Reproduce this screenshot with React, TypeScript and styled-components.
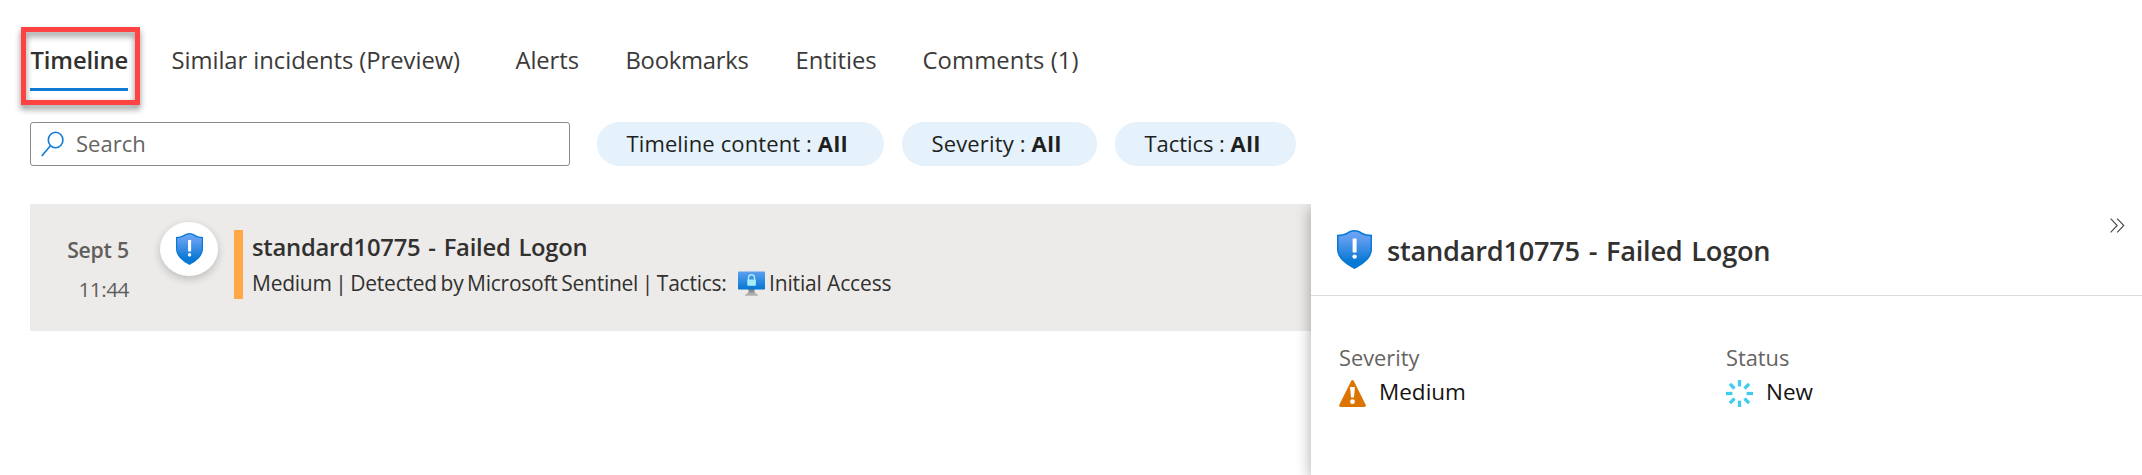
import React from 'react';
import styled, { createGlobalStyle } from 'styled-components';

const GlobalStyle = createGlobalStyle`
  * { box-sizing: border-box; }
  body {
    margin: 0;
    background: #fff;
    color: #323130;
    font-family: "Open Sans", "Noto Sans", sans-serif;
    overflow: hidden;
  }
  h1, h2, p { margin: 0; font-weight: 400; }
  svg { display: block; flex: none; }
`;

const Page = styled.main`
  display: flex;
  flex-direction: column;
  width: 2142px;
  height: 475px;
  overflow: hidden;
`;

const TabList = styled.nav`
  display: flex;
  align-items: flex-start;
  height: 122px;
  padding: 40px 0 0 30px;
`;

const TabSlot = styled.div<{ $width: number }>`
  width: ${(p) => p.$width}px;
  flex: none;
`;

const Tab = styled.a<{ $active?: boolean; $tracking: number }>`
  position: relative;
  display: inline-block;
  height: 51px;
  line-height: 40px;
  font-size: 23.8px;
  letter-spacing: ${(p) => p.$tracking}px;
  font-weight: ${(p) => (p.$active ? 600 : 400)};
  white-space: nowrap;
  color: #3b3a39;
  ${(p) => p.$active && 'width: 98px; padding-left: 0.5px; border-bottom: 3px solid #0f7bd6; color: #323130;'}
`;

const Highlight = styled.span`
  position: absolute;
  top: -13px;
  left: -9px;
  width: 119px;
  height: 78px;
  border: 5px solid #ff4343;
  filter: drop-shadow(0 4px 3px rgba(0, 0, 0, 0.45));
  pointer-events: none;
`;

const Filters = styled.div`
  display: flex;
  height: 82px;
  padding-left: 30px;
`;

const SearchBox = styled.label`
  display: flex;
  align-items: center;
  gap: 12px;
  width: 540px;
  height: 44px;
  margin-right: 27px;
  padding-left: 10px;
  border: 1px solid #8a8886;
  border-radius: 3px;
  font-size: 22px;
  line-height: 40px;
  color: #666462;
`;

const SearchText = styled.span`
  height: 42px;
`;

const Pill = styled.button<{ $width: number; $tracking?: number }>`
  width: ${(p) => p.$width}px;
  height: 44px;
  margin: 0 18px 0 0;
  padding: 0 0 2px 29.5px;
  border: 0;
  border-radius: 22px;
  background: #e5f1fb;
  color: #201f1e;
  font: 400 22px/42px "Open Sans", "Noto Sans", sans-serif;
  letter-spacing: ${(p) => p.$tracking ?? 0}px;
  text-align: left;
  white-space: nowrap;

  b { font-weight: 700; letter-spacing: 0.5px; }
`;

const Content = styled.div`
  display: flex;
  height: 271px;
  padding-left: 30px;
`;

const Timeline = styled.section`
  width: 1281px;
  flex: none;
`;

const Incident = styled.article`
  display: flex;
  height: 127px;
  background: #ecebe9;
`;

const When = styled.div`
  width: 99px;
  padding-top: 27px;
  text-align: right;
  color: #605e5c;
`;

const Day = styled.p`
  font-size: 21.2px;
  line-height: 38px;
  font-weight: 600;
  letter-spacing: -0.2px;
`;

const Time = styled.p`
  font-size: 20.8px;
  line-height: 40px;
  letter-spacing: -0.5px;
`;

const Badge = styled.div`
  display: flex;
  align-items: center;
  justify-content: center;
  width: 58px;
  height: 54px;
  margin: 18px 16px 0 31px;
  border-radius: 50%;
  background: #fff;
  box-shadow: 0 3px 8px rgba(0, 0, 0, 0.2);
`;

const SeverityBar = styled.div`
  width: 9px;
  height: 69px;
  margin: 26px 9px 0 0;
  background: #ffa845;
`;

const Summary = styled.div`
  padding-top: 23px;
  white-space: nowrap;
`;

const IncidentTitle = styled.h2`
  font-size: 23.8px;
  line-height: 40px;
  font-weight: 600;
  letter-spacing: -0.25px;
  word-spacing: 2px;
`;

const Meta = styled.div`
  display: flex;
  align-items: flex-start;
  font-size: 21px;
  line-height: 32px;
`;

const MetaText = styled.span`
  width: 486px;
  letter-spacing: -0.25px;
  word-spacing: -1.5px;
`;

const Tactic = styled.span`
  letter-spacing: -0.15px;
`;

const TacticIcon = styled.span`
  width: 27px;
  margin-right: 4px;
  padding-top: 4px;
`;

const Panel = styled.aside`
  width: 831px;
  background: #fff;
  clip-path: inset(0 0 0 -20px);
  box-shadow: 0 4px 14px rgba(0, 0, 0, 0.34);
`;

const PanelHeader = styled.header`
  display: flex;
  height: 92px;
  padding: 26px 17px 0 26px;
  border-bottom: 1px solid #dddcdb;
`;

const PanelTitle = styled.h1`
  margin: 0 auto 0 15px;
  font-size: 27.2px;
  line-height: 42px;
  font-weight: 600;
  letter-spacing: -0.25px;
  word-spacing: 2px;
`;

const Collapse = styled.span`
  margin-top: -12px;
`;

const Facts = styled.div`
  display: flex;
  padding: 43px 0 0 28px;
`;

const Fact = styled.div`
  width: 387px;
`;

const FactLabel = styled.p`
  font-size: 21.8px;
  line-height: 38px;
  color: #666462;
`;

const FactValue = styled.p`
  display: flex;
  align-items: flex-start;
  gap: 13px;
  height: 32px;
  margin-top: -1px;
  font-size: 22.5px;
  line-height: 32px;
  color: #151413;

  svg { margin-top: 4px; }
`;

const Shield = ({ width, height, id }: { width: number; height: number; id: string }) => (
  <svg width={width} height={height} viewBox="0 0 35 39" preserveAspectRatio="none">
    <defs>
      <linearGradient id={id} x1="0" y1="0" x2="0" y2="1">
        <stop offset="0" stopColor="#6ba4f4" />
        <stop offset="0.25" stopColor="#5a9aee" />
        <stop offset="0.85" stopColor="#0778d4" />
      </linearGradient>
    </defs>
    <path d="M17.5 0C21 0 23 1.2 25 2.5C28 4.2 31 4.6 35 4.8V19C35 28 27 34 17.5 39C8 34 0 28 0 19V4.8C4 4.6 7 4.2 10 2.5C12 1.2 14 0 17.5 0Z" fill="#0778d4" />
    <path d="M17.5 1.5C20.5 1.5 22.3 2.7 24.3 4C27 5.6 30 6 33.5 6.2V19C33.5 27 26 32.5 17.5 37.2C9 32.5 1.5 27 1.5 19V6.2C5 6 8 5.6 10.7 4C12.7 2.7 14.5 1.5 17.5 1.5Z" fill={`url(#${id})`} />
    <rect x="15.6" y="8.5" width="4" height="14" rx="0.5" fill="#fff" />
    <circle cx="17.6" cy="26.6" r="2.2" fill="#fff" />
  </svg>
);

const SearchIcon = () => (
  <svg width="23" height="26" viewBox="0 0 23 26" fill="none" stroke="#0f7bd6" strokeWidth="1.6">
    <ellipse cx="14.6" cy="9" rx="7.3" ry="7.8" />
    <path d="M9.4 14.8L0.8 25" />
  </svg>
);

const MonitorIcon = () => (
  <svg width="27" height="26" viewBox="0 0 27 26">
    <defs>
      <linearGradient id="screen" x1="0" y1="0" x2="0" y2="1">
        <stop offset="0" stopColor="#5f9ff0" />
        <stop offset="1" stopColor="#0476d3" />
      </linearGradient>
      <linearGradient id="stand" x1="0" y1="0" x2="0" y2="1">
        <stop offset="0" stopColor="#777" />
        <stop offset="1" stopColor="#c4c3c2" />
      </linearGradient>
    </defs>
    <path d="M10.5 18H16.5V21.5L20 24V25H7V24L10.5 21.5Z" fill="url(#stand)" />
    <rect x="0" y="0.5" width="27" height="18" rx="0.8" fill="url(#screen)" />
    <path d="M10.5 9.5V6.7A3 3 0 0 1 16.5 6.7V9.5" fill="none" stroke="#a5ecfb" strokeWidth="1.4" />
    <rect x="9.3" y="8.5" width="8.6" height="6.2" rx="0.6" fill="#a5ecfb" />
  </svg>
);

const WarningIcon = () => (
  <svg width="27" height="27" viewBox="0 0 27 27">
    <path d="M12.2 0.9Q13.5 -0.7 14.8 0.9L26.7 24.8Q27.2 26.8 25.5 27H1.5Q-0.2 26.8 0.3 24.8Z" fill="#dc7401" />
    <path d="M11 7H16L14.9 17.5H12.1Z" fill="#fff" />
    <circle cx="13.5" cy="21.7" r="2.4" fill="#fff" />
  </svg>
);

const NewIcon = () => (
  <svg width="27" height="27" viewBox="0 0 27 27" stroke="#40cdeb" strokeWidth="3.3">
    {[0, 45, 90, 135, 180, 225, 270, 315].map((angle) => (
      <path key={angle} d="M13.5 0V6.4" transform={`rotate(${angle} 13.5 13.5)`} />
    ))}
  </svg>
);

const ChevronsIcon = () => (
  <svg width="15" height="15" viewBox="0 0 15 15" fill="none" stroke="#484644" strokeWidth="1.1">
    <path d="M0.6 0.6L7.2 7.5L0.6 14.4M7.2 0.6L13.8 7.5L7.2 14.4" />
  </svg>
);

const tabs = [
  { label: 'Timeline', width: 141.5, tracking: -0.11, active: true },
  { label: 'Similar incidents (Preview)', width: 344, tracking: -0.05 },
  { label: 'Alerts', width: 110, tracking: -0.1 },
  { label: 'Bookmarks', width: 170, tracking: -0.25 },
  { label: 'Entities', width: 127, tracking: -0.07 },
  { label: 'Comments (1)', width: 170, tracking: 0.1 },
];

const filters = [
  { label: 'Timeline content', width: 287, tracking: 0.12 },
  { label: 'Severity', width: 195, tracking: 0.15 },
  { label: 'Tactics', width: 181, tracking: -0.05 },
];

export default function App() {
  return (
    <Page>
      <GlobalStyle />
      <TabList>
        {tabs.map((tab) => (
          <TabSlot key={tab.label} $width={tab.width}>
            <Tab $active={tab.active} $tracking={tab.tracking}>
              {tab.label}
              {tab.active && <Highlight />}
            </Tab>
          </TabSlot>
        ))}
      </TabList>
      <Filters>
        <SearchBox>
          <SearchIcon />
          <SearchText>Search</SearchText>
        </SearchBox>
        {filters.map((filter) => (
          <Pill key={filter.label} $width={filter.width} $tracking={filter.tracking}>
            {filter.label} : <b>All</b>
          </Pill>
        ))}
      </Filters>
      <Content>
        <Timeline>
          <Incident>
            <When>
              <Day>Sept 5</Day>
              <Time>11:44</Time>
            </When>
            <Badge>
              <Shield width={27} height={32} id="badge-shield" />
            </Badge>
            <SeverityBar />
            <Summary>
              <IncidentTitle>standard10775 - Failed Logon</IncidentTitle>
              <Meta>
                <MetaText>Medium | Detected by Microsoft Sentinel | Tactics:</MetaText>
                <TacticIcon>
                  <MonitorIcon />
                </TacticIcon>
                <Tactic>Initial Access</Tactic>
              </Meta>
            </Summary>
          </Incident>
        </Timeline>
        <Panel>
          <PanelHeader>
            <Shield width={35} height={39} id="panel-shield" />
            <PanelTitle>standard10775 - Failed Logon</PanelTitle>
            <Collapse>
              <ChevronsIcon />
            </Collapse>
          </PanelHeader>
          <Facts>
            <Fact>
              <FactLabel>Severity</FactLabel>
              <FactValue>
                <WarningIcon />
                Medium
              </FactValue>
            </Fact>
            <Fact>
              <FactLabel>Status</FactLabel>
              <FactValue>
                <NewIcon />
                New
              </FactValue>
            </Fact>
          </Facts>
        </Panel>
      </Content>
    </Page>
  );
}
